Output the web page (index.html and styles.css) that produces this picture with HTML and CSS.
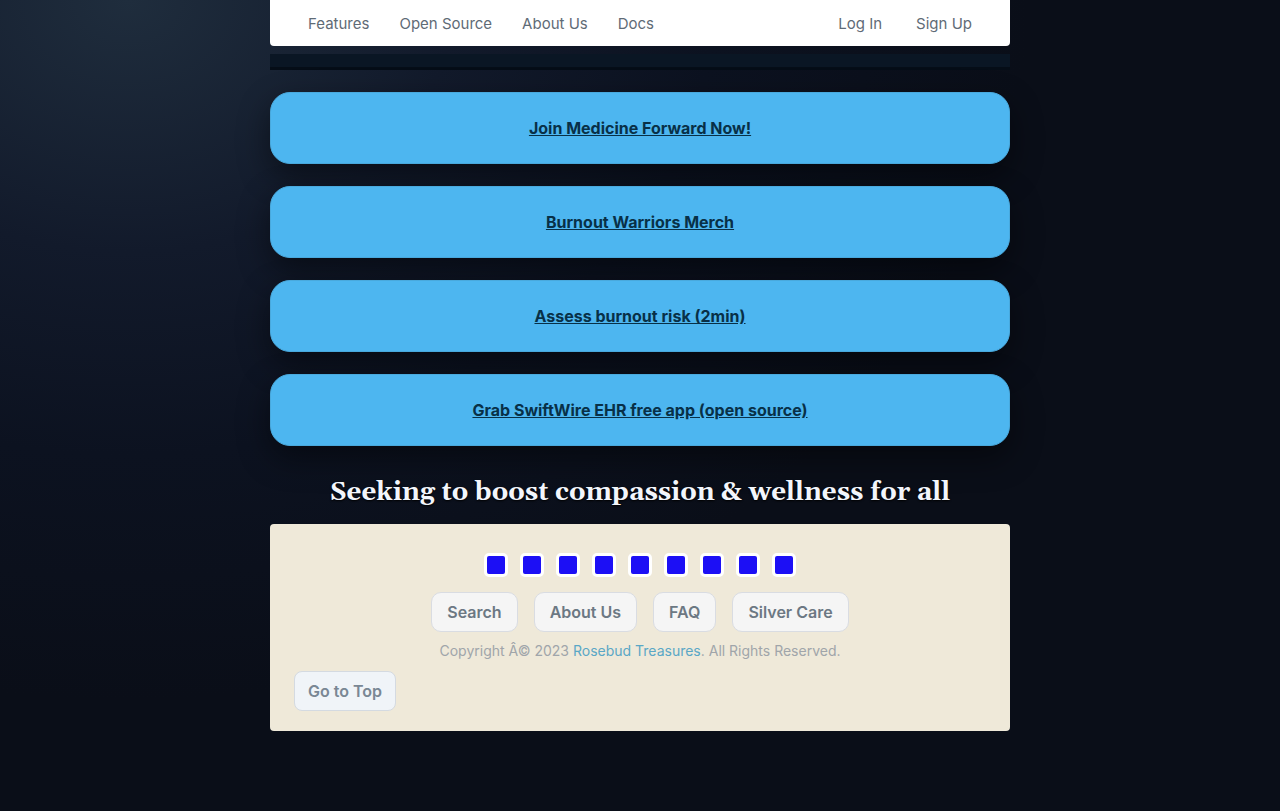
FILE: index.html
```html
<!DOCTYPE html>
<html lang="en">
<head>
<meta charset="utf-8">
<meta name="viewport" content="width=device-width, initial-scale=1">
<title>Medicine Forward</title>
<link rel="stylesheet" href="styles.css">
</head>
<body class="page">
<div class="wrap" id="top">
  <nav class="nav">
    <div class="nav-main">
      <a href="#features">Features</a>
      <a href="#open-source">Open Source</a>
      <a href="#about">About Us</a>
      <a href="#docs">Docs</a>
    </div>
    <div class="nav-account">
      <a href="#login">Log In</a>
      <a href="#signup">Sign Up</a>
    </div>
  </nav>
  <div class="strip"></div>
  <main class="cards">
    <div class="card"><a href="#join">Join Medicine Forward Now!</a></div>
    <div class="card"><a href="#merch">Burnout Warriors Merch</a></div>
    <div class="card"><a href="#assess">Assess burnout risk (2min)</a></div>
    <div class="card"><a href="#swiftwire">Grab SwiftWire EHR free app (open source)</a></div>
  </main>
  <h2 class="tagline">Seeking to boost compassion &amp; wellness for all</h2>
  <footer class="footer">
    <div class="social">
      <a href="#s1" aria-label="Social link 1"></a>
      <a href="#s2" aria-label="Social link 2"></a>
      <a href="#s3" aria-label="Social link 3"></a>
      <a href="#s4" aria-label="Social link 4"></a>
      <a href="#s5" aria-label="Social link 5"></a>
      <a href="#s6" aria-label="Social link 6"></a>
      <a href="#s7" aria-label="Social link 7"></a>
      <a href="#s8" aria-label="Social link 8"></a>
      <a href="#s9" aria-label="Social link 9"></a>
    </div>
    <div class="pills">
      <a class="pill" href="#search">Search</a>
      <a class="pill" href="#about">About Us</a>
      <a class="pill" href="#faq">FAQ</a>
      <a class="pill" href="#silver">Silver Care</a>
    </div>
    <p class="copyright">Copyright Â© 2023 <a href="#rosebud">Rosebud Treasures</a>. All Rights Reserved.</p>
    <button class="to-top" type="button">Go to Top</button>
  </footer>
</div>
</body>
</html>
```
FILE: styles.css
```css
* { box-sizing: border-box; }

.page {
  margin: 0;
  min-height: 100vh;
  padding: 0 24px 80px;
  font-family: Inter, "Liberation Sans", sans-serif;
  font-size: 16px;
  line-height: 24px;
  background: radial-gradient(900px 700px at 10% 0%, #1f2d3d 0%, #121a2b 36%, #0c1220 65%, #0a0e18 100%);
}

.wrap {
  max-width: 740px;
  margin: 0 auto;
}

.nav {
  display: flex;
  justify-content: space-between;
  padding: 12px 38px 10px;
  background: #fff;
  border-radius: 0 0 4px 4px;
  font-size: 15px;
}

.nav a {
  color: #5f6b76;
  text-decoration: none;
}

.nav-main { display: flex; gap: 30px; }
.nav-account { display: flex; gap: 34px; }

.strip {
  height: 16px;
  margin-top: 8px;
  background: #0a1624;
  border-bottom: 3px solid #050d17;
}

.cards {
  display: grid;
  gap: 22px;
  margin-top: 22px;
}

.card {
  padding: 23px;
  border: 1px solid #49a9dd;
  border-radius: 20px;
  background: #4db6f0;
  box-shadow: 0 12px 32px rgba(0, 0, 0, 0.45);
  text-align: center;
  font-weight: 700;
}

.card a { color: #083047; }

.tagline {
  margin: 28px 0 12px;
  color: #f3f6fc;
  font-family: Gelasio, Georgia, "Liberation Serif", serif;
  font-size: 26px;
  font-weight: 700;
  line-height: 38px;
  text-align: center;
  text-shadow: 0 1px 2px #000;
}

.footer {
  padding: 29px 24px 20px;
  border-radius: 4px;
  background: #efe9d9;
}

.social {
  display: flex;
  justify-content: center;
  gap: 12px;
}

.social a {
  width: 24px;
  height: 24px;
  border: 3px solid #fff;
  border-radius: 5px;
  background: #1c0ff5;
}

.pills {
  display: flex;
  flex-wrap: wrap;
  justify-content: center;
  gap: 16px;
  margin-top: 15px;
}

.pill {
  padding: 7px 15px;
  border: 1px solid #d9dce2;
  border-radius: 10px;
  background: #f5f5f5;
  color: #6c7883;
  font-weight: 600;
  text-decoration: none;
}

.copyright {
  margin: 7px 0 8px;
  color: #a0a5aa;
  font-size: 14px;
  text-align: center;
}

.copyright a {
  color: #5aa7c6;
  text-decoration: none;
}

.to-top {
  display: block;
  padding: 7px 13px;
  border: 1px solid #d4dae1;
  border-radius: 8px;
  background: #f0f4f8;
  color: #7a8794;
  font: inherit;
  font-weight: 600;
}
```
